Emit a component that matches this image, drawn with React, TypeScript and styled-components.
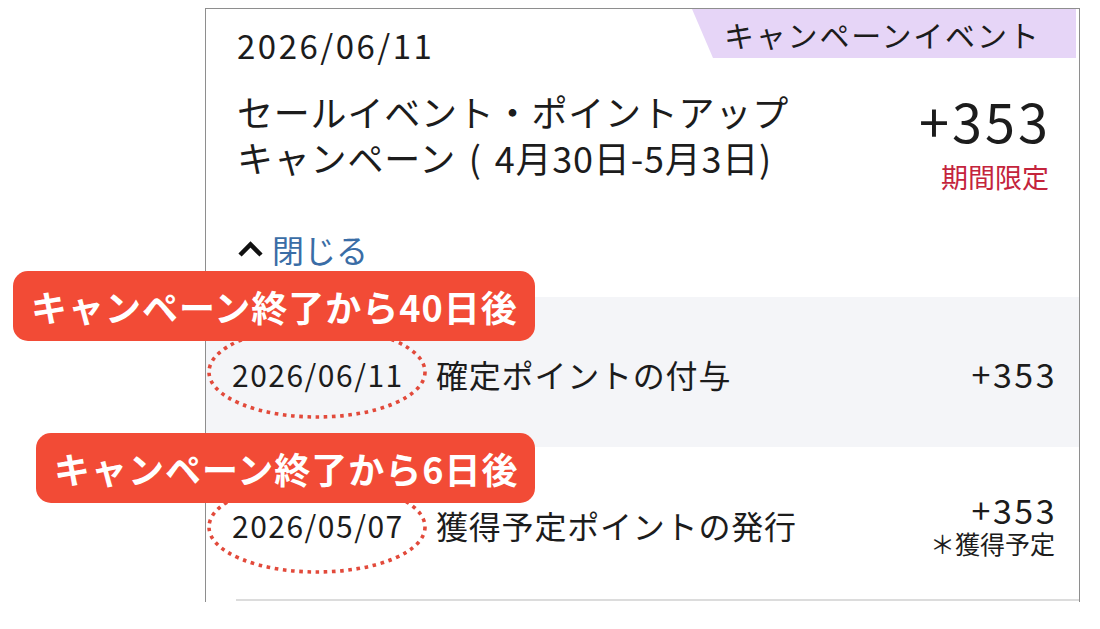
import React from "react";
import styled, { createGlobalStyle } from "styled-components";

const GlobalStyle = createGlobalStyle`
  html, body {
    margin: 0;
    padding: 0;
    background: #ffffff;
  }
  body {
    font-family: "Noto Sans CJK JP", "Noto Sans", sans-serif;
    color: #1c1c1c;
    -webkit-font-smoothing: antialiased;
  }
`;

const Stage = styled.div`
  width: 1100px;
  height: 629px;
  padding: 8px 0 0 205px;
  box-sizing: border-box;
  overflow: hidden;
`;

const Card = styled.section`
  width: 875px;
  height: 594px;
  box-sizing: border-box;
  border: 1px solid #8e8e8e;
  border-bottom: none;
  background: #ffffff;
  display: flex;
  flex-direction: column;
`;

const Header = styled.header`
  position: relative;
  padding: 16px 30px 28px 31px;
  display: flex;
  flex-direction: column;
`;

const Tag = styled.div`
  position: absolute;
  top: 0;
  right: 3px;
  width: 384px;
  height: 49px;
  box-sizing: border-box;
  padding-left: 32px;
  background: #e6d5f7;
  clip-path: polygon(0 0, 100% 0, 100% 100%, 21px 100%);
  display: flex;
  align-items: center;
  font-size: 30px;
  letter-spacing: 1.8px;
  color: #1c1c1c;
`;

const EntryDate = styled.div`
  font-size: 33px;
  line-height: 40px;
  letter-spacing: 2.5px;
`;

const MainRow = styled.div`
  margin-top: 23px;
  display: flex;
  justify-content: space-between;
  align-items: flex-start;
`;

const Title = styled.div`
  font-size: 36px;
  line-height: 46px;
  letter-spacing: 0.8px;
  word-spacing: 4px;
`;

const AmountCol = styled.div`
  margin-top: 2px;
  display: flex;
  flex-direction: column;
  align-items: flex-end;
`;

const BigAmount = styled.div`
  font-size: 54px;
  line-height: 60px;
  letter-spacing: 3px;
  margin-right: -2px;
`;

const LimitNote = styled.div`
  margin-top: 10px;
  font-size: 27px;
  line-height: 34px;
  color: #c4243c;
`;

const CloseLink = styled.button`
  margin-top: 35px;
  padding: 0;
  border: none;
  background: none;
  align-self: flex-start;
  display: flex;
  align-items: center;
  gap: 8px;
  font-family: inherit;
  font-size: 32px;
  line-height: 40px;
  color: #3a6da6;
  cursor: pointer;
`;

const Row = styled.div<{ $shaded?: boolean; $height: number }>`
  position: relative;
  height: ${(p) => p.$height}px;
  box-sizing: border-box;
  padding: 4px 24px 0 26px;
  display: flex;
  align-items: center;
  background: ${(p) => (p.$shaded ? "#f4f5f8" : "#ffffff")};
`;

const Divider = styled.div`
  height: 2px;
  margin-left: 30px;
  background: #dcdcdc;
`;

const RowDate = styled.div`
  width: 204px;
  flex: none;
  font-size: 30px;
  line-height: 36px;
  letter-spacing: 1.5px;
`;

const RowTitle = styled.div`
  flex: 1;
  font-size: 32px;
  line-height: 40px;
  letter-spacing: 0.8px;
`;

const RowAmount = styled.div`
  display: flex;
  flex-direction: column;
  align-items: flex-end;
`;

const RowPoints = styled.div`
  font-size: 34px;
  line-height: 36px;
  letter-spacing: 2.5px;
  margin-right: -2px;
`;

const RowNote = styled.div`
  font-size: 25px;
  line-height: 30px;
`;

const Callout = styled.div<{ $left: number; $top: number }>`
  position: absolute;
  left: ${(p) => p.$left}px;
  top: ${(p) => p.$top}px;
  z-index: 2;
  height: 70px;
  box-sizing: border-box;
  padding: 0 17px 0 18px;
  border-radius: 15px;
  background: #f24b36;
  color: #ffffff;
  display: flex;
  align-items: center;
  font-size: 36px;
  font-weight: 700;
  letter-spacing: 1px;
  white-space: nowrap;
`;

const Ring = styled.svg<{ $top: number }>`
  position: absolute;
  left: 0;
  top: ${(p) => p.$top}px;
  z-index: 1;
  overflow: visible;
  pointer-events: none;
`;

function DottedRing({ top }: { top: number }) {
  return (
    <Ring $top={top} width="222" height="96" viewBox="0 0 222 96">
      <ellipse
        cx="111"
        cy="48"
        rx="108"
        ry="45"
        fill="none"
        stroke="#e24a3b"
        strokeWidth="3.6"
        strokeDasharray="3.6 4.6"
      />
    </Ring>
  );
}

function ChevronUp() {
  return (
    <svg width="27" height="18" viewBox="0 0 27 18">
      <polyline
        points="3,15 13.5,4.5 24,15"
        fill="none"
        stroke="#111"
        strokeWidth="4.5"
        strokeLinejoin="miter"
      />
    </svg>
  );
}

export default function App() {
  return (
    <>
      <GlobalStyle />
      <Stage>
        <Card>
          <Header>
            <Tag>キャンペーンイベント</Tag>
            <EntryDate>2026/06/11</EntryDate>
            <MainRow>
              <Title>
                セールイベント・ポイントアップ
                <br />
                キャンペーン ( 4月30日-5月3日)
              </Title>
              <AmountCol>
                <BigAmount>+353</BigAmount>
                <LimitNote>期間限定</LimitNote>
              </AmountCol>
            </MainRow>
            <CloseLink type="button">
              <ChevronUp />
              閉じる
            </CloseLink>
          </Header>

          <Row $shaded $height={150}>
            <DottedRing top={27} />
            <Callout $left={-193} $top={-26}>
              キャンペーン終了から40日後
            </Callout>
            <RowDate>2026/06/11</RowDate>
            <RowTitle>確定ポイントの付与</RowTitle>
            <RowAmount>
              <RowPoints>+353</RowPoints>
            </RowAmount>
          </Row>

          <Row $height={152}>
            <DottedRing top={32} />
            <Callout $left={-170} $top={-14}>
              キャンペーン終了から6日後
            </Callout>
            <RowDate>2026/05/07</RowDate>
            <RowTitle>獲得予定ポイントの発行</RowTitle>
            <RowAmount>
              <RowPoints>+353</RowPoints>
              <RowNote>＊獲得予定</RowNote>
            </RowAmount>
          </Row>
          <Divider />
        </Card>
      </Stage>
    </>
  );
}
